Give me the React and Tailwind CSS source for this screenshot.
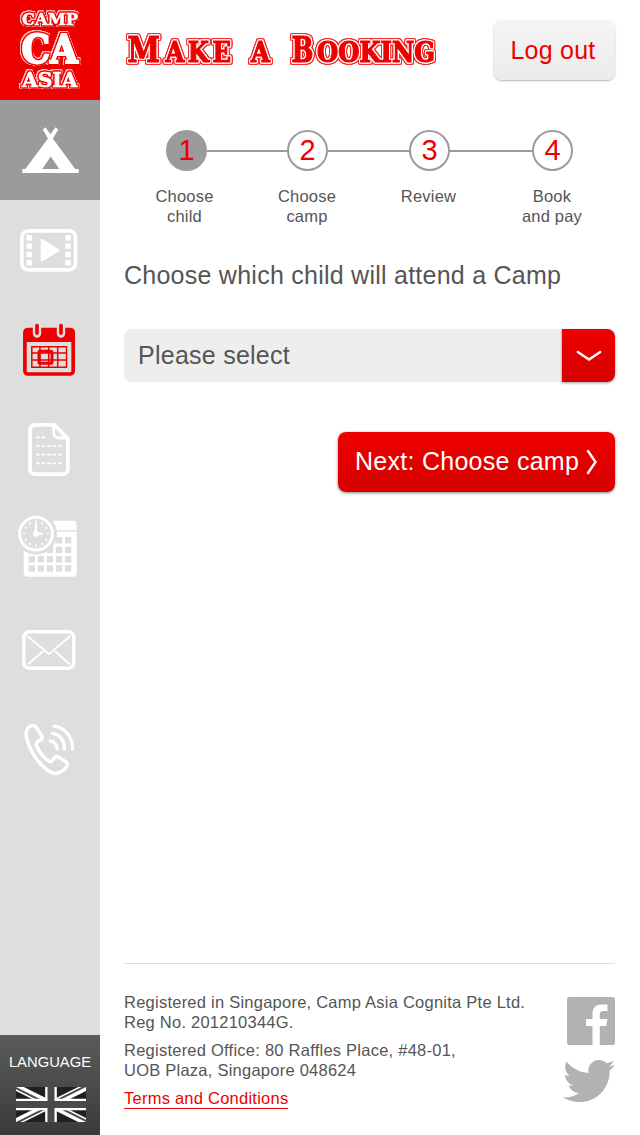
import React from "react";
import { FaTwitter } from "react-icons/fa";

const VARSITY = "font-['DejaVu_Serif_Condensed','DejaVu_Serif',serif] font-bold [font-stretch:condensed]";

function Logo() {
  return (
    <svg
      viewBox="0 0 100 100"
      className={
        VARSITY +
        " block size-[100px] fill-white stroke-white [&_text]:[filter:drop-shadow(1px_0_#ef0000)_drop-shadow(-1px_0_#ef0000)_drop-shadow(0_1px_#ef0000)_drop-shadow(0_-1px_#ef0000)_drop-shadow(0.7px_0_#ffb8b8)_drop-shadow(-0.7px_0_#ffb8b8)_drop-shadow(0_0.7px_#ffb8b8)_drop-shadow(0_-0.7px_#ffb8b8)]"
      }
    >
      <text x="22" y="25" strokeWidth="0.5" fontSize="16" textLength="56" lengthAdjust="spacingAndGlyphs">CAMP</text>
      <text x="21.5" y="63" strokeWidth="1.8" fontSize="40" textLength="56.5" lengthAdjust="spacingAndGlyphs">CA</text>
      <text x="22" y="86.500" strokeWidth="0.7" fontSize="20.500" textLength="55.500" lengthAdjust="spacingAndGlyphs">ASIA</text>
    </svg>
  );
}

function Title() {
  return (
    <h1 className="m-0">
      <svg
        viewBox="124 20 320 60"
        className={VARSITY + " block h-[60px] w-[320px] fill-[#ef0000] stroke-[#ef0000]"}
      >
        <text
          y="61.5"
          strokeWidth="1.1"
          className="[filter:drop-shadow(1px_0_#fff)_drop-shadow(-1px_0_#fff)_drop-shadow(0_1px_#fff)_drop-shadow(0_-1px_#fff)_drop-shadow(1px_0_#f03030)_drop-shadow(-1px_0_#f03030)_drop-shadow(0_1px_#f03030)_drop-shadow(0_-1px_#f03030)]"
        >
          <tspan x="127.5" fontSize="36" textLength="32.500" lengthAdjust="spacingAndGlyphs">M</tspan>
          <tspan x="165.500" fontSize="27" textLength="65.500" lengthAdjust="spacing" className="uppercase">ake</tspan>
          <tspan> </tspan>
          <tspan x="251" fontSize="27" className="uppercase">a</tspan>
          <tspan> </tspan>
          <tspan x="291.500" fontSize="36" textLength="22" lengthAdjust="spacingAndGlyphs">B</tspan>
          <tspan x="317" fontSize="27" textLength="118" lengthAdjust="spacingAndGlyphs" className="uppercase">ooking</tspan>
        </text>
      </svg>
    </h1>
  );
}

function NavItem({ y, label, className = "", children }) {
  return (
    <a aria-label={label} className={"block size-[100px] " + className}>
      <svg viewBox={`0 ${y} 100 100`} className="block size-[100px]" fill="none" stroke="#fff" strokeLinecap="round" strokeLinejoin="round">
        {children}
      </svg>
    </a>
  );
}

const filmRows = [235, 243.3, 251.7, 260];
const dashRows = [446, 454.7, 463.3];
const cellCols = [28.6, 37.7, 46.8, 55.9, 65];
const cellRows = [537, 546.6, 556, 565.2];
const hours = [0, 30, 60, 90, 120, 150, 180, 210, 240, 270, 300, 330];

function Sidebar() {
  return (
    <aside className="flex h-[1135px] w-[100px] shrink-0 flex-col bg-[#dedede]">
      <div className="bg-[#ef0000]"><Logo /></div>
      <nav className="flex flex-1 flex-col">
        <NavItem y={100} label="Camps" className="bg-[#9b9b9b]">
          <g fill="#fff" stroke="none">
            <path d="M22.3 169h3L48 138.5l-5.2-9 2.7-2.2 5 7 5-7 2.8 2.2-5.5 9L75.2 169h3.5v4H22.3zM42.3 169h17l-8.6-12.5z" fillRule="evenodd" />
          </g>
        </NavItem>
        <NavItem y={200} label="Videos">
          <rect x="21.9" y="230.9" width="53.6" height="39" rx="6.5" strokeWidth="3.7" />
          <g fill="#fff" stroke="none">
            {filmRows.map((y) => (
              <g key={y}>
                <rect x="26.6" y={y} width="5.5" height="5.5" rx="0.6" />
                <rect x="65.3" y={y} width="5.5" height="5.5" rx="0.6" />
              </g>
            ))}
            <path d="M40.7 240c0-.9.8-1.4 1.6-.9l17 10.4c.9.5.9 1.3 0 1.8l-17 9.9c-.8.5-1.6 0-1.6-.9z" />
          </g>
        </NavItem>
        <NavItem y={300} label="Bookings">
          <g stroke="#ef0000">
            <rect x="24.9" y="329.5" width="48.3" height="44.5" rx="3" strokeWidth="3.7" />
            <path d="M25 330h48v11.5H25z" fill="#ef0000" strokeWidth="1" />
            <path d="M37 322v11.5M61 322v11.5" stroke="#dedede" strokeWidth="8.4" />
            <path d="M37 325.6v7.6M61 325.6v7.6" strokeWidth="3.6" />
            <path d="M31.8 346.7h34.7v20.6H31.8zM40 346.7v20.6M48.7 346.7v20.6M57.7 346.7v20.6M31.8 353h34.7M31.8 360h34.7" strokeWidth="1.5" />
            <rect x="39" y="351.300" width="13" height="12" rx="1" strokeWidth="3" />
          </g>
        </NavItem>
        <NavItem y={400} label="Forms">
          <path d="M35 424.8h19.2L67.8 438.500v30.700a5 5 0 0 1-5 5H35a5 5 0 0 1-5-5v-39.400a5 5 0 0 1 5-5z" strokeWidth="3.700" />
          <path d="M53.700 425.500v7.500a5 5 0 0 0 5 5h8" strokeWidth="2.800" />
          <g strokeWidth="1.700" strokeLinecap="butt" strokeDasharray="3.700 1.750">
            <path d="M36 437.400h9.200" />
            {dashRows.map((y) => <path key={y} d={`M36 ${y}h25.500`} />)}
          </g>
        </NavItem>
        <NavItem y={500} label="Timetable">
          <path d="M23.700 530.500h53v42.200a4 4 0 0 1-4 4h-45a4 4 0 0 1-4-4z" fill="#fff" stroke="none" />
          <path d="M50 520.800h22.700a4 4 0 0 1 4 4v7H50z" fill="#fff" stroke="none" />
          <path d="M50 531h27" stroke="#dedede" strokeWidth="1.300" strokeLinecap="butt" />
          <g fill="#dedede" stroke="none">
            {cellRows.map((y) => cellCols.map((x) => <rect key={x + "-" + y} x={x} y={y} width="6.300" height="6.500" />))}
            <circle cx="36" cy="533.700" r="21" />
          </g>
          <circle cx="36" cy="533.700" r="16.400" strokeWidth="3" />
          <g fill="#fff" stroke="none">
            {hours.map((a) => <circle key={a} cx="36" cy="521.800" r="1.100" transform={`rotate(${a} 36 533.700)`} />)}
            <circle cx="36" cy="533.700" r="3" />
          </g>
          <path d="M36 524v9.700h6" strokeWidth="2.200" />
        </NavItem>
        <NavItem y={600} label="Messages">
          <rect x="23.800" y="631.800" width="50" height="36.400" rx="5.500" strokeWidth="3.500" />
          <path d="M27.500 636.200 49 654l21-17.800M28.300 664l14-12.200M69.500 664l-14-12.200" strokeWidth="1.900" />
        </NavItem>
        <NavItem y={700} label="Call us">
          <path d="M30.800 726c2-.8 4.200-.6 5.400 1.200l5.500 8.500c1 1.700.5 3-1 4.100l-2.900 1.900c-1.700 1.300-2 2.800-1 4.800 2.600 5.300 6.500 10.500 11.100 14.100 1.700 1.300 3.300 1.200 4.500-.3l2-2.500c1.200-1.400 2.800-1.700 4.300-.7l7.200 4.800c1.700 1.100 2 2.800.9 4.500-2.300 3.500-5.800 6-10 6.900-3.800.8-7.400-1.500-11.500-5-8.800-7.600-15.800-18.700-18.600-30.200-1.300-5-.5-10.200 4.100-12.100z" strokeWidth="3.500" />
          <path d="M50.500 741c3.700.3 6.600 3.600 6.500 8M52.300 733.400c7.200.6 12.600 7.500 12.300 15.700M54 726.200c10.600 1 19 11 18.500 22.800" strokeWidth="3.300" />
        </NavItem>
      </nav>
      <div className="flex h-[100px] flex-col items-center bg-linear-to-b from-[#5b5b5b] to-[#3b3b3b] pt-[17px] text-white">
        <span className="text-[14.8px] leading-[20px]">LANGUAGE</span>
        <svg viewBox="0 0 60 30" preserveAspectRatio="none" className="mt-[15px] ml-px h-[35px] w-[70px]">
          <clipPath id="half"><path d="M30 15h30v15zv15H0zH0V0zV0h30z" /></clipPath>
          <path d="M0 0h60v30H0z" fill="#202020" />
          <path d="M0 0l60 30M60 0L0 30" stroke="#fff" strokeWidth="6" />
          <path d="M0 0l60 30M60 0L0 30" stroke="#4c4c4c" strokeWidth="3.400" clipPath="url(#half)" />
          <path d="M30 0v30M0 15h60" stroke="#fff" strokeWidth="10" />
          <path d="M30 0v30M0 15h60" stroke="#4a4a4a" strokeWidth="6" />
        </svg>
      </div>
    </aside>
  );
}

function Step({ n, active }) {
  return (
    <div
      className={
        "flex size-[41px] shrink-0 items-center justify-center rounded-full border-2 border-[#9b9b9b] text-[29px] leading-none text-[#ef0000] " +
        (active ? "bg-[#9b9b9b]" : "bg-white")
      }
    >
      {n}
    </div>
  );
}

export default function App() {
  return (
    <div className="flex h-[1135px] w-[640px] overflow-hidden bg-white font-['Liberation_Sans',Arial,sans-serif] text-[#555]">
      <Sidebar />
      <main className="flex flex-1 flex-col pt-5 pr-[25px] pl-6">
        <header className="flex h-[60px] justify-between">
          <Title />
          <button className="h-[60px] w-[121px] shrink-0 rounded-lg bg-linear-to-b from-[#f5f5f5] to-[#ebebeb] pt-px pr-[3px] text-[25px] tracking-[0.25px] text-[#ef0000] shadow-[0_1px_2px_rgba(0,0,0,0.3)]">
            Log out
          </button>
        </header>

        <div className="mt-[50px] flex items-center pl-[42px]">
          <Step n="1" active />
          <div className="h-[2px] w-[80px] bg-[#9b9b9b]" />
          <Step n="2" />
          <div className="h-[2px] w-[81px] bg-[#9b9b9b]" />
          <Step n="3" />
          <div className="h-[2px] w-[82px] bg-[#9b9b9b]" />
          <Step n="4" />
        </div>
        <div className="mt-[15px] -mr-px grid h-[40px] grid-cols-[121px_124px_119px_128px] text-center text-[16.5px] leading-[20px] tracking-[0.2px]">
          <div>Choose<br />child</div>
          <div>Choose<br />camp</div>
          <div>Review</div>
          <div>Book<br />and pay</div>
        </div>

        <h2 className="mt-[34px] text-[25px] leading-[30px] font-normal tracking-[0.25px] whitespace-nowrap">
          Choose which child will attend a Camp
        </h2>

        <div className="mt-[39px] flex h-[53px] shrink-0 rounded-lg bg-[#eee]">
          <span className="flex-1 pl-[14px] text-[25px] leading-[52px] tracking-[0.25px]">Please select</span>
          <span className="flex w-[53px] items-center justify-center rounded-r-lg bg-linear-to-b from-[#ef0000] to-[#d60000] shadow-[0_1px_3px_rgba(0,0,0,0.4)]">
            <svg viewBox="0 0 26 12" className="h-3 w-[26px]" fill="none" stroke="#fff" strokeWidth="2.400" strokeLinecap="round">
              <path d="M1.800 2 13 9.500 24.200 2" />
            </svg>
          </span>
        </div>

        <button className="mt-[50px] flex h-[60px] w-[277px] shrink-0 items-center self-end rounded-lg bg-linear-to-b from-[#ef0000] to-[#d60000] pl-[17px] text-[25px] tracking-[0.27px] whitespace-nowrap text-white shadow-[0_1px_3px_rgba(0,0,0,0.5)]">
          <span className="pb-px">Next: Choose camp</span>
          <svg viewBox="0 0 12 26" className="ml-[6.5px] h-[26px] w-3" fill="none" stroke="#fff" strokeWidth="2.400" strokeLinecap="round">
            <path d="M2 2 9.500 13 2 24" />
          </svg>
        </button>

        <footer className="mt-auto ml-px flex h-[172px] shrink-0 justify-between border-t border-[#dedede] pt-[28px]">
          <div className="-ml-px text-[16.5px] leading-[20px] tracking-[0.24px] whitespace-nowrap">
            <p>Registered in Singapore, Camp Asia Cognita Pte Ltd.<br />Reg No. 201210344G.</p>
            <p className="mt-2">Registered Office: 80 Raffles Place, #48-01,<br />UOB Plaza, Singapore 048624</p>
            <p className="mt-2">
              <a className="inline-block border-b border-[#ef0000] text-[#ef0000]">Terms and Conditions</a>
            </p>
          </div>
          <div className="flex flex-col items-end pt-[5px]">
            <svg viewBox="0 0 48 48" className="size-[48px]">
              <rect width="48" height="48" rx="2.800" fill="#b2b2b2" />
              <path d="M25.500 48V29H19v-7h6.500v-5c0-6.200 3.600-9.500 9.400-9.500h5.600V14h-4c-2.700 0-3.700 1.200-3.700 3.500V22h7.500l-1 7h-6.500v19z" fill="#fff" />
            </svg>
            <FaTwitter className="mt-[10px] size-[52px] text-[#b2b2b2]" preserveAspectRatio="none" />
          </div>
        </footer>
      </main>
    </div>
  );
}
